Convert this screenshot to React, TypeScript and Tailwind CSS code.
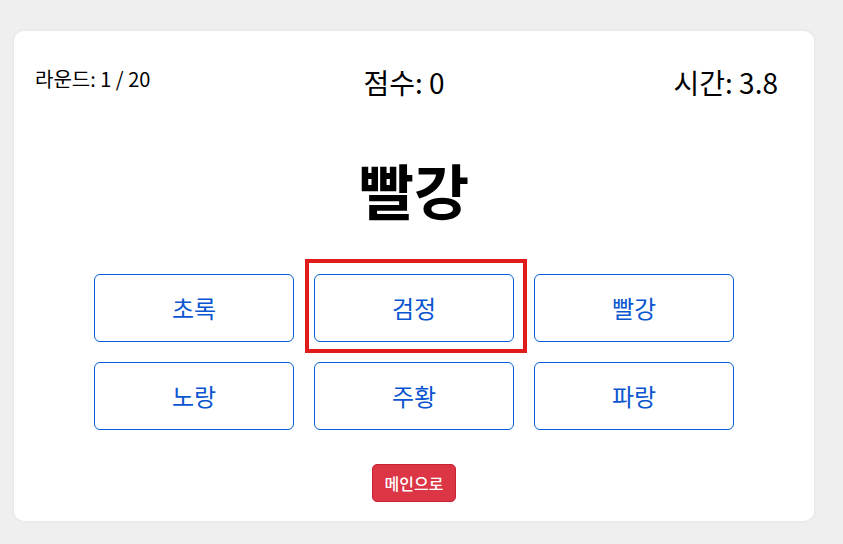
import React from "react";

const font = { fontFamily: '"Noto Sans CJK KR", "Noto Sans", sans-serif' };

export default function App() {
  const options = ["초록", "검정", "빨강", "노랑", "주황", "파랑"];
  return (
    <div className="w-[843px] h-[544px] bg-[#efefef] pt-[31px] pl-[14px]" style={font}>
      <div className="relative w-[800px] h-[490px] bg-white rounded-[10px] shadow-[0_0_4px_rgba(0,0,0,0.06)] flex flex-col items-center">
        <div className="w-full flex justify-between items-start pl-[21px] pr-[36px] pt-[31px] text-black">
          <div className="text-[20px] leading-[28px] mt-[3px]">라운드: 1 / 20</div>
          <div className="text-[28px] leading-[40px] pr-[16px]">점수: 0</div>
          <div className="text-[28px] leading-[40px]">시간: 3.8</div>
        </div>
        <h1 className="mt-[47px] text-[60px] leading-[80px] font-bold text-black">빨강</h1>
        <div className="mt-[45px] grid grid-cols-3 gap-x-[20px] gap-y-[20px]">
          {options.map((o) => (
            <button
              key={o}
              className="w-[200px] h-[68px] border border-[#0b5ed7] rounded-[6px] text-[24px] text-[#0a55d0] bg-white"
            >
              {o}
            </button>
          ))}
        </div>
        <button className="mt-[34px] w-[84px] h-[38px] bg-[#dc3545] border border-[#c82333] text-white text-[16px] font-medium rounded-[5px]">
          메인으로
        </button>
        <div className="absolute left-[291px] top-[228px] w-[222px] h-[94px] border-[4px] border-[#e01b1b] pointer-events-none" />
      </div>
    </div>
  );
}
